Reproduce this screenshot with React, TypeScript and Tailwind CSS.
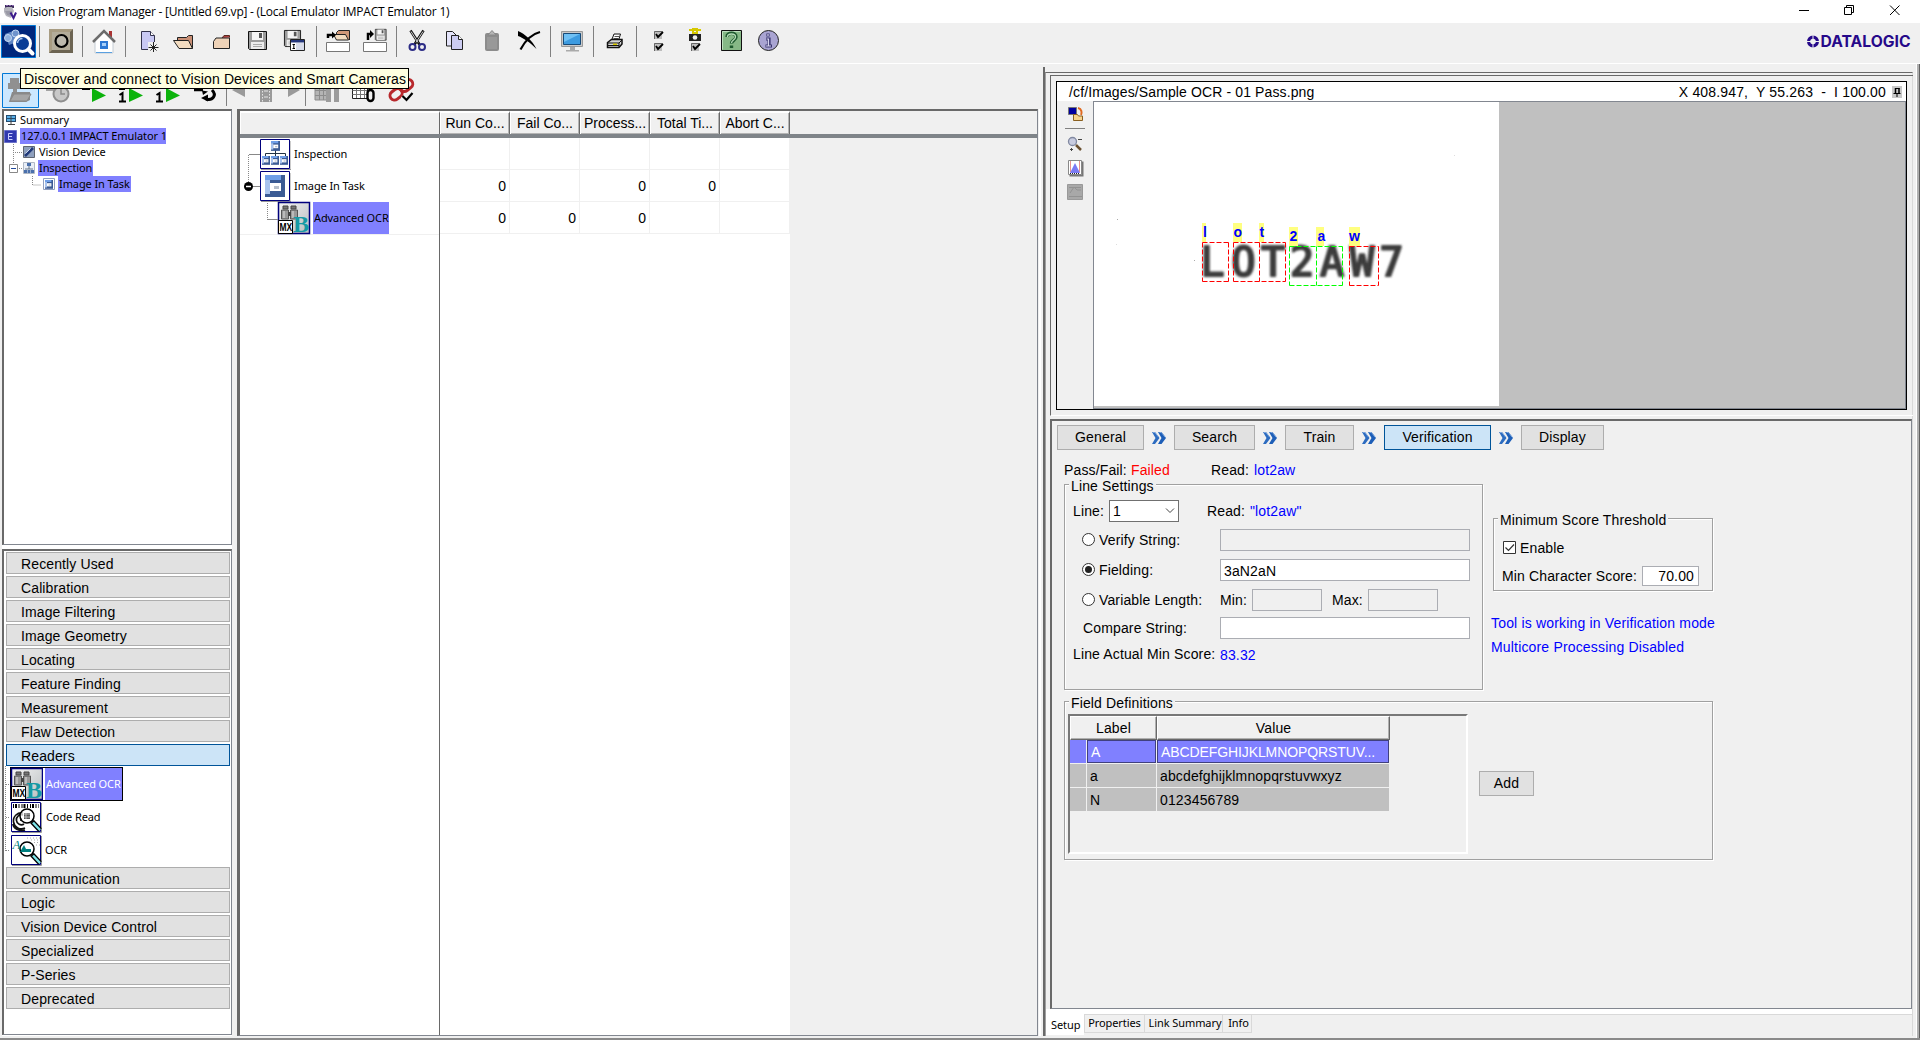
import React from "react";

type IcoProps = { x: number; w: number; y?: number; h?: number; className?: string; children?: React.ReactNode };

/* Icon slot: shapes are drawn in window coordinates, the slot takes its place by flow. */
function Ico({ x, w, y = 23, h = 40, className = "", children }: IcoProps) {
  return (
    <svg className={`block shrink-0 ${className}`} width={w} height={h} viewBox={`${x} ${y} ${w} ${h}`} fill="none">
      {children}
    </svg>
  );
}

const Sep = ({ className = "mt-[3px] h-[31px]" }: { className?: string }) => (
  <div className={`w-px shrink-0 bg-[#808080] ${className}`} />
);

function TitleBar() {
  return (
    <div className="flex h-[23px] shrink-0 items-center bg-white">
      <Ico x={0} y={0} w={23} h={23}>
        <path d="M5 5h9v3H5z" fill="#3c2a5c" />
        <path d="M6 5.500h2M9 5.500h2M12 5.500h2" stroke="#8a6ab0" />
        <path d="M4 8l3-1h5l2 4-3 7-5-2-2-4z" fill="#b4b4bc" />
        <path d="M5 11h7l-1 5-4-1z" fill="#9a9aa6" />
        <path d="M10.500 12.500l3 5.500 2.500-5.500" stroke="#3b1a8c" strokeWidth="2" />
      </Ico>
      <span className="font-['Open_Sans'] text-[12px] leading-[23px] tracking-[-0.24px] whitespace-pre text-black">
        Vision Program Manager - [Untitled 69.vp] - (Local Emulator IMPACT Emulator 1)
      </span>
      <Ico x={1790} y={0} w={130} h={23} className="ml-auto">
        <path d="M1799 10.500h10" stroke="#000" />
        <path d="M1844.500 7.500h7v7h-7zM1846.500 7.500v-2h7v7h-2" stroke="#000" />
        <path d="M1890 5.500l9.500 9.500M1899.500 5.500l-9.500 9.500" stroke="#000" />
      </Ico>
    </div>
  );
}

function Floppy({ x, y, s = 19 }: { x: number; y: number; s?: number }) {
  return (
    <g transform={`translate(${x} ${y}) scale(${s / 19})`}>
      <path d="M.500 .500h18v18h-17l-1-1z" fill="#9c9c9c" stroke="#111" />
      <path d="M4 1h11v8H4z" fill="#f4f4f4" />
      <path d="M11 2h3v5h-3z" fill="#555" />
      <path d="M3 11h13v7H3z" fill="#ececec" />
      <path d="M5 13.500h9M5 15.500h9" stroke="#aaa" />
    </g>
  );
}

function MainToolbar() {
  return (
    <div className="flex h-[41px] shrink-0 items-start border-b border-white bg-[#f0f0f0]">
      <Ico x={0} w={39}>
        <path d="M1.500 25.500h34v32h-34z" fill="#00277c" stroke="#0078d7" />
        <path d="M5 34l8-3 6 2-2 9-8 3z" fill="#5f86c4" />
        <circle cx="8" cy="38" r="3.500" fill="#8fb0de" stroke="#c4d8f2" />
        <circle cx="15.500" cy="33.500" r="3.500" fill="#6f93cc" stroke="#c4d8f2" />
        <circle cx="22.500" cy="43.500" r="8" fill="#0a3d96" stroke="#fff" strokeWidth="3" />
        <path d="M28.500 49.500l4 4" stroke="#fff" strokeWidth="4" strokeLinecap="round" />
        <path d="M17.500 43a5 5 0 0 1 5-4.500" stroke="#a9c6ee" strokeWidth="1.500" />
      </Ico>
      <Sep />
      <Ico x={40} w={42}>
        <path d="M49 29h24v24H49z" fill="#a89c82" />
        <path d="M49 53l3-3h18l3 3zM73 29v24l-3-3V32z" fill="#6c6452" />
        <path d="M52 32h18v18H52z" fill="#b3ac9a" />
        <circle cx="61.500" cy="41" r="6" fill="#bdb9ae" stroke="#000" strokeWidth="2.200" />
      </Ico>
      <Sep />
      <Ico x={83} w={42}>
        <path d="M109 31h3v6h-3z" fill="#a33" />
        <path d="M95 41l9-9 9 9v12H95z" fill="#fff" stroke="#c4ccd4" />
        <path d="M93 42l11-11 11 11" stroke="#6d6d6d" strokeWidth="2.500" />
        <path d="M100 41h8v8h-8z" fill="#2c78d4" />
        <path d="M102 43h4v3h-4z" fill="#a8d0fa" />
        <path d="M96 52.500h16" stroke="#5aa0e0" />
      </Ico>
      <Sep />
      <Ico x={126} w={40}>
        <path d="M141.500 31.500h9l4 4v14h-13z" fill="#c9c9f4" stroke="#33334d" />
        <path d="M150.500 31.500v4h4" fill="#fff" stroke="#33334d" />
        <path d="M148 42h11v10h-11z" fill="#f0f0f0" />
        <path d="M153.500 42v10M148.500 47.500h10M150.500 44.500l6 6M156.500 44.500l-6 6" stroke="#222" />
      </Ico>
      <Ico x={166} w={36}>
        <path d="M177.500 45.500v-8h9l2-2h4v13" fill="#c88e74" stroke="#222" />
        <path d="M173.500 40.500h15l4 8h-13.500z" fill="#f3dcc0" stroke="#222" />
      </Ico>
      <Ico x={202} w={36}>
        <path d="M222 38l2-2.500h5.500v2" fill="#b04040" stroke="#5a2a20" />
        <path d="M213.500 48.500v-7l2.500-3.500h13.500v10.500z" fill="#efd3b8" stroke="#222" />
      </Ico>
      <Ico x={238} w={37}>
        <Floppy x={248} y={31} />
      </Ico>
      <Ico x={275} w={41}>
        <Floppy x={284} y={30} s={17} />
        <path d="M290.500 39.500h14v11h-14z" fill="#fff" stroke="#222" />
        <path d="M291 40h13v2.500h-13z" fill="#24367c" />
        <path d="M292.500 44.500h2.500m-1.200 0v4m-1.300 0h2.500" stroke="#000" />
        <path d="M296 43h8v7h-8z" fill="#d8dcea" />
      </Ico>
      <Sep />
      <Ico x={317} w={39}>
        <path d="M336.500 36.500v-4l2-2h11v9.500" fill="#d09878" stroke="#222" />
        <path d="M333.500 34.500h12l3 5.500h-12z" fill="#f3dcc0" stroke="#222" />
        <path d="M328 38v-3h4" stroke="#000" strokeWidth="2.500" />
        <path d="M332 31.500l4 3.500-4 3.500z" fill="#000" />
        <path d="M326.500 42.500h23v9h-23z" fill="#fff" stroke="#777" />
      </Ico>
      <Ico x={356} w={40}>
        <Floppy x={375} y={29} s={11.500} />
        <path d="M368 40v-6h2" stroke="#000" strokeWidth="2.500" />
        <path d="M370 30l4 4-4 4z" fill="#000" />
        <path d="M363.500 42.500h23v9h-23z" fill="#fff" stroke="#777" />
      </Ico>
      <Sep />
      <Ico x={397} w={40}>
        <path d="M410.500 30.500l9 14M423.500 30.500l-9 14" stroke="#111" strokeWidth="2.600" />
        <path d="M411 31.500l7 11M423 31.500l-7 11" stroke="#e8e8e8" strokeWidth=".9" />
        <circle cx="412.500" cy="47" r="3" stroke="#2d2d86" strokeWidth="2" />
        <circle cx="422" cy="47" r="3" stroke="#2d2d86" strokeWidth="2" />
      </Ico>
      <Ico x={437} w={37}>
        <path d="M446.500 31.500h6l3.500 3.500v11h-9.500z" fill="#e4e4fa" stroke="#222" />
        <path d="M451.500 35.500h7l4 4v10h-11z" fill="#cdcdf2" stroke="#222" />
        <path d="M458.500 35.500v4h4" fill="#fff" stroke="#222" />
      </Ico>
      <Ico x={474} w={36}>
        <rect x="485" y="33" width="14" height="18" rx="2" fill="#8c8c8c" />
        <path d="M488 35l4-4.500 4 4.500z" fill="#b5b5b5" stroke="#888" />
        <path d="M487 37h10v12h-10z" fill="#999" />
      </Ico>
      <Ico x={510} w={40}>
        <path d="M518 31c7 3 14 9 18.500 18-7-7-13-11-18.500-13z" fill="#000" />
        <path d="M540 32c-8 2-15 9-19.500 17.500" stroke="#000" strokeWidth="2.200" />
      </Ico>
      <Sep />
      <Ico x={551} w={42}>
        <path d="M561.500 31.500h21v15h-21z" fill="#c9c9c9" stroke="#999" />
        <path d="M563.500 33.500h17v11h-17z" fill="#3d9be0" stroke="#174a78" />
        <path d="M564 34h16l-16 8z" fill="#6fc0f4" />
        <path d="M570 47h5v3h4v1.500h-13V50h4z" fill="#aaa" />
      </Ico>
      <Sep />
      <Ico x={594} w={42}>
        <path d="M611.500 40.500l2.500-6.500h6.500l-2 6.500z" fill="#fff" stroke="#111" />
        <path d="M613.500 38.500h5M614.500 36.500h5" stroke="#555" />
        <path d="M607.500 42.500l4-3h10.500v4.500l-3 3.500h-11.500z" fill="#d6d6d6" stroke="#111" strokeWidth="1.500" />
        <path d="M608 43h11l3-3M608 45.500h11M619 43v4" stroke="#111" />
        <path d="M613 44.300h4" stroke="#d8c800" strokeWidth="1.500" />
      </Ico>
      <Sep />
      <Ico x={637} w={40}>
        {[31, 43].map((y) => (
          <g key={y}>
            <path d={`M654 ${y}h8v8h-8z`} fill="#bdbdbd" />
            <path d={`M654.500 ${y + 8}v-7.500h8`} stroke="#666" />
            <path d={`M656 ${y + 3}l2 3 5-5`} stroke="#000" strokeWidth="1.800" />
          </g>
        ))}
      </Ico>
      <Ico x={677} w={35}>
        <path d="M689 30h12M693 29h4v4h-4z" stroke="#d6c800" strokeWidth="2" />
        <path d="M689 34h12v7h-12z" fill="#222" />
        <circle cx="695" cy="37.500" r="2.300" fill="#eee" />
        <path d="M691 43h8v8h-8z" fill="#bdbdbd" />
        <path d="M691.500 51v-7.500h8" stroke="#666" />
        <path d="M693 46l2 3 5-5" stroke="#000" strokeWidth="1.800" />
      </Ico>
      <Ico x={712} w={38}>
        <path d="M721.500 30.500h20v20h-20z" fill="#86b886" stroke="#111" />
        <path d="M722.500 49.500v-18h18" stroke="#bfe0bf" />
        <path d="M727 37c0-5 9-5 9 0 0 3.500-4.500 3-4.500 6.500M731.500 45.500v2.500" stroke="#1f5a2f" strokeWidth="3.400" />
        <path d="M727.500 37c0-4 8-4 8 0 0 3-4 3-4 6" stroke="#b7dcb7" strokeWidth="1.300" />
      </Ico>
      <Ico x={750} w={40}>
        <circle cx="768.500" cy="40.500" r="10" fill="#a9a4d2" stroke="#222" />
        <path d="M766 39h3v7m-3.500 0h6.500M768 33.500v3" stroke="#3a3670" strokeWidth="3.200" />
        <path d="M766.500 39h2v7m-2.500 0h5M768 34v2" stroke="#d8d6f0" strokeWidth="1.200" />
      </Ico>
      <Ico x={1800} w={120} className="ml-auto">
        <circle cx="1813" cy="41.500" r="4.400" stroke="#26098a" strokeWidth="3.200" />
        <path d="M1813 35v4.500M1813 43.500v5M1806.500 41.500h4.500M1815 41.500h5" stroke="#f0f0f0" strokeWidth="1" />
        <text x="1820.500" y="47" fontFamily="Inter" fontWeight="700" fontSize="15.500" fill="#26098a" textLength="90" lengthAdjust="spacingAndGlyphs">
          DATALOGIC
        </text>
      </Ico>
    </div>
  );
}

function RunToolbar() {
  const play = (x: number) => <path d={`M${x} 88v14l14-6.500z`} fill="#0cb30c" />;
  return (
    <div className="relative flex h-[45px] shrink-0">
      <Ico x={0} y={64} h={45} w={41}>
        <path d="M2.500 73.500h36v34h-36z" fill="#cce8ff" stroke="#0078d7" />
        <path d="M10 78h9v5h-9zM8 83h14v6H8zM13 89h4v4h-4z" fill="#909090" />
        <path d="M12 92h18v8l-4 2H9z" fill="#8a8a8a" />
        <path d="M10 101l4-7h17l-4 7z" fill="#a6a6a6" stroke="#888" />
      </Ico>
      <Ico x={41} y={64} h={45} w={37}>
        <circle cx="61" cy="94" r="7.500" fill="#c8c8c8" stroke="#8f8f8f" strokeWidth="2" />
        <path d="M61 89v5h4M46 90h8" stroke="#8a8a8a" strokeWidth="1.500" />
      </Ico>
      <Ico x={78} y={64} h={45} w={37}>
        {play(92)}
        <path d="M82 88.500h8" stroke="#000" strokeWidth="3" />
      </Ico>
      <Ico x={115} y={64} h={45} w={37}>
        {play(129)}
        <path d="M119 89h6" stroke="#000" strokeWidth="2" />
        <path d="M119.500 95l3-2v8.500m-3.500 0h7" stroke="#000" strokeWidth="2" />
      </Ico>
      <Ico x={152} y={64} h={45} w={37}>
        {play(166)}
        <path d="M156.500 95l3-2v8.500m-3.500 0h7" stroke="#000" strokeWidth="2" />
      </Ico>
      <Ico x={189} y={64} h={45} w={37}>
        <path d="M194 90h9" stroke="#000" strokeWidth="2.500" />
        <path d="M212 90c5 5 1 11-6 9" stroke="#000" strokeWidth="3" />
        <path d="M202 90.500l6 1-5 3.500zM208 94.500v7l-7-3.500z" fill="#000" />
      </Ico>
      <Sep className="mt-[11px] h-[31px]" />
      <Ico x={227} y={64} h={45} w={26}>
        <path d="M245 83v14l-13-7z" fill="#9a9a9a" />
      </Ico>
      <Ico x={253} y={64} h={45} w={28}>
        <path d="M260 80h12v22h-12z" fill="#9a9a9a" />
        <path d="M262.500 82v20M269.500 82v20" stroke="#e4e4e4" strokeDasharray="1.500 1.500" />
        <path d="M264 91h4M264 97h4" stroke="#e4e4e4" />
      </Ico>
      <Ico x={281} y={64} h={45} w={24}>
        <path d="M288 83v14l12-7z" fill="#9a9a9a" />
      </Ico>
      <Sep className="mt-[11px] h-[31px]" />
      <Ico x={306} y={64} h={45} w={40}>
        <path d="M315 86h13v14h-13z" fill="#b4b4b4" stroke="#8c8c8c" />
        <path d="M315 90.500h13M315 95.500h13M319.500 86v14M323.500 86v14" stroke="#8c8c8c" />
        <path d="M326 86h5v16h-5zM334 86h5v16h-5z" fill="#9c9c9c" />
      </Ico>
      <Ico x={346} y={64} h={45} w={37}>
        <path d="M352.500 86.500h15v12h-15z" fill="#fff" stroke="#222" />
        <path d="M352.500 90.500h15M352.500 94.500h15M356.500 86v12M360.500 86v12M364.500 86v12" stroke="#777" />
        <rect x="367.500" y="90" width="6" height="11" rx="3" fill="#f0f0f0" stroke="#000" strokeWidth="2.400" />
      </Ico>
      <Ico x={383} y={64} h={45} w={37}>
        <rect x="390" y="90" width="13" height="9" rx="4.500" stroke="#b8282c" strokeWidth="3" transform="rotate(-38 396 95)" />
        <rect x="399" y="81" width="14" height="9" rx="4.500" stroke="#b8282c" strokeWidth="3" transform="rotate(-38 406 85)" />
        <path d="M402.500 96l4 4 6-7" stroke="#f0f0f0" strokeWidth="4.500" />
        <path d="M402.500 96l4 4 6-7" stroke="#000" strokeWidth="2.200" />
      </Ico>
      <div className="absolute left-[20px] top-[4px] z-20 h-[21px] w-[389px] border border-black bg-[#ffffe1] pl-[3px] font-['Liberation_Sans'] text-[14px] leading-[20px] tracking-[0.13px] whitespace-nowrap">
        Discover and connect to Vision Devices and Smart Cameras
      </div>
    </div>
  );
}

function TreeRow({ icon, children, selected, pl, w = "" }: { icon: React.ReactNode; children: string; selected?: boolean; pl: string; w?: string }) {
  return (
    <div className={`flex h-[16px] items-center ${pl}`}>
      {icon}
      <span className={`h-[16px] pl-px leading-[15px] whitespace-nowrap ${w} ${selected ? "bg-[#8080ff]" : ""}`}>{children}</span>
    </div>
  );
}

function MiniTask({ x, y, s }: { x: number; y: number; s: number }) {
  return (
    <g transform={`translate(${x} ${y}) scale(${s / 20})`}>
      <path d="M0 0h20v22H0z" fill="#3b5b94" />
      <path d="M0 0h16v5H0z" fill="#6f9fe8" />
      <path d="M0 5h5v14H0z" fill="#a9c4ee" />
      <path d="M5 8h11v8H5z" fill="#fff" />
      <path d="M9 11h5v3H9z" fill="#b8c0cc" />
    </g>
  );
}

function DeviceTree() {
  return (
    <div className="relative h-[436px] w-[230px] border-t-2 border-r border-b border-l-2 border-[#696969] border-r-[#828790] border-b-[#828790] bg-white pt-px font-['Noto_Sans'] text-[11px] tracking-[-0.1px]">
      <svg className="absolute left-0 top-[32px]" width="60" height="46" fill="none">
        <path d="M9.500 1v24M11 9.500h8M15 25.500h4M28.500 33v9h9" stroke="#888" strokeDasharray="1 1" />
        <path d="M5.500 21.500h8v8h-8z" fill="#fff" stroke="#888" />
        <path d="M7 25.500h5" stroke="#224a9a" />
      </svg>
      <TreeRow pl="pl-[1px]" icon={<Ico x={0} y={0} w={14} h={12}><path d="M1 1h10v7H1z" fill="#234b70" /><path d="M2 2h8v2H2zM2 5h8v2H2z" fill="#58aee6" /><path d="M6 1v9M3 10.500h7" stroke="#444" /></Ico>}>Summary</TreeRow>
      <TreeRow pl="pl-0" w="w-[146px]" selected icon={<Ico x={0} y={0} w={16} h={13}><path d="M.500 .500h12v12H.500z" fill="#3038b0" stroke="#6a70c8" /><path d="M8.500 3.500h-4v6h4M5 6.500h3" stroke="#c8ccff" /></Ico>}>127.0.0.1 IMPACT Emulator 1</TreeRow>
      <TreeRow pl="pl-[19px]" icon={<Ico x={0} y={0} w={15} h={13}><path d="M.500 .500h11v11h-11z" fill="#8fa0bd" stroke="#5f6570" /><path d="M2 10l8-8" stroke="#223a78" strokeWidth="2.500" /><path d="M2.500 7.500l5-5" stroke="#c8d4ea" /></Ico>}>Vision Device</TreeRow>
      <TreeRow pl="pl-[19px]" w="w-[55px]" selected icon={<Ico x={0} y={0} w={15} h={13}><path d="M.500 .500h11v11h-11z" fill="#e9eef6" stroke="#b0b8c4" /><path d="M4 1h4v3H4zM1 8h3v3H1zM4.500 8h3v3h-3zM8 8h3v3H8z" fill="#4a70ac" /><path d="M6 4v3M2 7h8" stroke="#678" /></Ico>}>Inspection</TreeRow>
      <TreeRow pl="pl-[38px]" w="w-[73px]" selected icon={<Ico x={0} y={0} w={16} h={13}><path d="M1.500 .500h11v11h-11z" fill="#fff" stroke="#90a0c0" /><MiniTask x={3} y={2} s={8} /></Ico>}>Image In Task</TreeRow>
    </div>
  );
}

function AdvancedOcrIcon() {
  return (
    <svg className="block shrink-0 overflow-visible" width="32" height="32" fill="none">
      <defs>
        <linearGradient id="steel" x1="0" x2="1" y1="0" y2="1">
          <stop offset="0" stopColor="#f4f4f4" />
          <stop offset="1" stopColor="#b9bec0" />
        </linearGradient>
      </defs>
      <path d="M.500 .500h31v31H.500z" fill="url(#steel)" stroke="#00007c" strokeWidth="1.500" />
      <path d="M5 4h5v3H5zM13 4h5v3h-5z" fill="#777" stroke="#444" />
      <path d="M3.500 8h7v9h-7zM12.500 8h7v9h-7z" fill="#999" stroke="#555" />
      <path d="M6 9v7M15 9v7" stroke="#ddd" />
      <path d="M10 10h3v4h-3z" fill="#444" />
      <text x="15" y="30" fontFamily="Liberation Serif" fontWeight="700" fontSize="24" fill="#159aa4">B</text>
      <path d="M.500 18.500h14v13H.500z" fill="#fff" stroke="#000" />
      <text x="1.500" y="29" fontFamily="Liberation Sans" fontWeight="700" fontSize="10" fill="#000" textLength="12.500" lengthAdjust="spacingAndGlyphs">MX</text>
    </svg>
  );
}

function Magnifier() {
  return (
    <g>
      <circle cx="16" cy="14" r="7" fill="#fff" fillOpacity=".7" stroke="#000" strokeWidth="1.500" />
      <path d="M21 19.500l8 8.500" stroke="#000" strokeWidth="5" />
      <path d="M22 20.500l7 7.500" stroke="#7fe6ea" strokeWidth="2.500" />
    </g>
  );
}

const Category = ({ name, active }: { name: string; active?: boolean }) => (
  <div className={`h-[22px] w-[224px] shrink-0 border pl-[14px] text-[14px] leading-[22px] tracking-[0.12px] ${active ? "border-[#005499] bg-[#cce4f7]" : "border-[#adadad] bg-[#e1e1e1]"}`}>{name}</div>
);

function ToolPalette() {
  const top = ["Recently Used", "Calibration", "Image Filtering", "Image Geometry", "Locating", "Feature Finding", "Measurement", "Flaw Detection"];
  const bottom = ["Communication", "Logic", "Vision Device Control", "Specialized", "P-Series", "Deprecated"];
  return (
    <div className="mt-[4px] h-[486px] w-[230px] border-t-2 border-r border-b border-l-2 border-[#696969] border-r-[#828790] border-b-[#828790] bg-white font-['Liberation_Sans']">
      <div className="flex flex-col gap-[2px] pt-[1px] pl-[2px]">
        {top.map((n) => <Category key={n} name={n} />)}
        <Category name="Readers" active />
      </div>
      <div className="relative flex h-[101px] flex-col pt-px pl-[6px] font-['Noto_Sans'] text-[11px] leading-[16px] tracking-[-0.1px]">
        <svg className="absolute left-0 top-0" width="8" height="90" fill="none">
          <path d="M1.500 0v85M2 18.500h4M2 51.500h4M2 84.500h4" stroke="#888" strokeDasharray="1 1" />
        </svg>
        <div className="flex h-[34px] w-[113px] items-center border border-black bg-[#8080ff]">
          <AdvancedOcrIcon />
          <div className="h-full w-[2px] bg-white" />
          <span className="pb-px pl-px whitespace-nowrap text-white">Advanced OCR</span>
        </div>
        <div className="mt-px flex h-[33px] items-start">
          <svg className="ml-px block" width="31" height="31" fill="none">
            <path d="M1 30.500h29.500V1" stroke="#999" />
            <path d="M.500 .500h29v29H.500z" fill="#fff" stroke="#00007c" />
            <path d="M2 4h26" stroke="#000" strokeWidth="4" strokeDasharray="1 1 2 1.500 1 2" />
            <path d="M14 26a8 8 0 1 1-2-15M13 22a5 5 0 1 1-1-9M10 19v-3M14 28C8 30 2 26 2 22" stroke="#111" strokeWidth="1.700" />
            <Magnifier />
            <path d="M13 11h6v6h-6z" fill="#555" />
            <path d="M13 12h6M13 15h6M15 11v6" stroke="#bbb" />
          </svg>
          <span className="pt-[7px] pl-[4px]">Code Read</span>
        </div>
        <div className="flex h-[32px] items-start">
          <svg className="ml-px block overflow-visible" width="31" height="31" fill="none">
            <path d="M1 30.500h29.500V1" stroke="#999" />
            <path d="M.500 .500h29v29H.500z" fill="#fff" stroke="#00007c" />
            <path d="M16 3h13M20 5h9M23 7.500h6M25 10h4" stroke="#aaa" strokeDasharray="1 2" />
            <Magnifier />
            <path d="M9 17l4-7 2 4h5v3z" fill="#008080" />
            <text x="1.500" y="14" fontFamily="Liberation Serif" fontStyle="italic" fontSize="13" fill="#008080">A</text>
          </svg>
          <span className="pt-[7px] pl-[3px]">OCR</span>
        </div>
      </div>
      <div className="flex flex-col gap-[2px] pl-[2px]">
        {bottom.map((n) => <Category key={n} name={n} />)}
      </div>
    </div>
  );
}

function TaskTable() {
  const cols = ["Run Co...", "Fail Co...", "Process...", "Total Ti...", "Abort C..."];
  const rows = [["", "", "", "", ""], ["0", "", "0", "0", ""], ["0", "0", "0", "", ""]];
  return (
    <div className="ml-[5px] flex h-[927px] w-[801px] flex-col border-t-2 border-r border-b border-l-[3px] border-[#696969] border-r-[#828790] border-b-[#828790] font-['Liberation_Sans'] text-[14px]">
      <div className="flex h-[27px] shrink-0 border-b-[4px] border-[#7f8489] bg-[#f0f0f0]">
        <div className="w-[200px] border-t-2 border-r border-l border-white border-r-[#696969]" />
        {cols.map((c) => (
          <div key={c} className="w-[70px] border-t-2 border-r border-l border-white border-r-[#696969] text-center leading-[20px] shadow-[inset_-1px_-1px_0_#b4b4b4]">{c}</div>
        ))}
      </div>
      <div className="flex grow">
        <div className="w-[200px] border-r border-[#696969] bg-white font-['Noto_Sans'] text-[11px] leading-[16px] tracking-[-0.1px]">
          <div className="relative border-b border-[#f0f0f0]">
            <svg className="absolute left-0 top-0" width="40" height="96" fill="none">
              <path d="M8.500 17v28M27.500 65v16" stroke="#888" strokeDasharray="1 1" />
              <path d="M9 16.500h11M12 48.500h8M27 81.500h11" stroke="#888" />
              <circle cx="8.500" cy="48.500" r="4.500" fill="#000" />
              <path d="M6 48.500h5" stroke="#fff" strokeWidth="1.500" />
            </svg>
            <div className="flex h-[32px] items-center pl-[20px]">
              <svg className="-mb-px block" width="31" height="31" fill="none">
                <path d="M1 30.500h30V2" stroke="#999" />
                <path d="M.500 .500h29v29H.500z" fill="#fff" stroke="#00007c" />
                <path d="M15.500 9v8M5.500 17v-2.500h20V17" stroke="#234" />
                <MiniTask x={11} y={2} s={9} />
                <MiniTask x={2} y={17} s={8} />
                <MiniTask x={11} y={17} s={8} />
                <MiniTask x={20} y={17} s={8} />
              </svg>
              <span className="pb-px pl-[3px]">Inspection</span>
            </div>
            <div className="flex h-[32px] items-center pl-[20px]">
              <svg className="-mb-px block" width="31" height="31" fill="none">
                <path d="M1 30.500h30V2" stroke="#999" />
                <path d="M.500 .500h29v29H.500z" fill="#fff" stroke="#00007c" />
                <MiniTask x={5} y={4} s={20} />
              </svg>
              <span className="pb-px pl-[3px]">Image In Task</span>
            </div>
            <div className="flex h-[32px] items-center pl-[38px]">
              <AdvancedOcrIcon />
              <span className="ml-[3px] h-[32px] w-[76px] bg-[#8080ff] pl-px leading-[31px] whitespace-nowrap">Advanced OCR</span>
            </div>
          </div>
        </div>
        <div className="w-[350px] bg-white">
          {rows.map((r, i) => (
            <div key={i} className="flex h-[32px]">
              {r.map((v, j) => (
                <div key={j} className="w-[70px] border-r border-b border-[#f0f0f0] pr-[3px] text-right leading-[32px]">{v}</div>
              ))}
            </div>
          ))}
        </div>
      </div>
    </div>
  );
}

function ImageCanvas() {
  const outlines = [
    ["M1202.5 242.5h26M1202.5 281.5h26M1202.5 242.5v39M1228.500 242.5v39", "#ff0000"],
    ["M1233.5 242.5h52M1233.5 281.5h52M1233.5 242.5v39M1259.5 242.5v39M1285.5 242.5v39", "#ff0000"],
    ["M1289.5 246.5h53M1289.5 285.5h53M1289.5 246.5v39M1316.5 246.5v39M1342.5 246.5v39", "#00ff00"],
    ["M1349.5 246.5h29M1349.5 285.5h29M1349.5 246.5v39M1378.5 246.5v39", "#ff0000"],
  ] as const;
  const marks = [
    [1202, 223, 4, "l", 1203],
    [1233, 223, 9, "o", 1233.5],
    [1259, 223, 5, "t", 1259.5],
    [1289, 227, 9, "2", 1289.5],
    [1316, 227, 8, "a", 1317.5],
    [1349, 227, 11, "w", 1349],
  ] as const;
  return (
    <svg className="block" width="406" height="304" viewBox="1094 102 406 304" fill="none">
      <path d="M1094 102h405v304h-405z" fill="#fff" />
      <path d="M1117 219.500h1M1194 260.500h1" stroke="#aaa" />
      <path d="M1116 244.500h1M1454 155.500h1" stroke="#ddd" />
      <filter id="soft"><feGaussianBlur stdDeviation=".8" /></filter>
      <g filter="url(#soft)" fill="#3c3c3c" stroke="#3c3c3c" strokeWidth="2.200" strokeLinejoin="round">
        <text x="1200.500 1231.500 1261 1290 1320 1350 1379.500" y="276" fontFamily="DejaVu Sans Mono" fontSize="40">LOT2AW7</text>
      </g>
      {marks.map(([x, y, w, t, tx]) => (
        <g key={t}>
          <rect x={x} y={y} width={w} height="19" fill="#ffff80" />
          <text x={tx} y={y + 14} fontFamily="Liberation Sans" fontWeight="700" fontSize="14" fill="#0000ff">{t}</text>
        </g>
      ))}
      {outlines.map(([d, c]) => (
        <path key={d} d={d} stroke={c} strokeDasharray="5 2" />
      ))}
    </svg>
  );
}

function ImageView() {
  return (
    <div className="ml-[3px] h-[341px] w-[863px] border-t border-l border-b border-[#696969] border-b-white pt-[5px] pl-[5px]">
      <div className="flex h-[329px] w-[851px] flex-col border border-black bg-[#f0f0f0]">
        <div className="flex h-[19px] shrink-0 items-center bg-white pl-[12px] font-['Liberation_Sans'] text-[14px] leading-[20px] tracking-[0.12px]">
          <span className="pt-px">/cf/Images/Sample OCR - 01 Pass.png</span>
          <span className="ml-auto pt-px tracking-[0.16px] whitespace-pre">X 408.947,  Y 55.263  -  I 100.00</span>
          <svg className="mr-[4px] ml-[6px] block" width="10" height="12" fill="none">
            <path d="M0 0h10v12H0z" fill="#c8c8c8" />
            <path d="M3.500 2v5M7 2v5" stroke="#000" strokeWidth="1.500" />
            <path d="M3 2.500h4.500M1.500 7.500h7M5 7.500v3.500" stroke="#000" />
          </svg>
        </div>
        <div className="flex h-[308px]">
          <div className="flex w-[36px] flex-col">
            <Ico x={1057} y={101} w={36} h={120}>
              <path d="M1068.500 107.500h8v7h-8z" fill="#0000a0" stroke="#777" />
              <path d="M1078 108c4 1 4 5 3 7" stroke="#e06a20" strokeWidth="2" />
              <path d="M1073.500 120.500v-6h4l1 1.500h4v4.500z" fill="#f8d48c" stroke="#8a6020" />
              <path d="M1065 128.500h20" stroke="#808080" />
              <circle cx="1072.500" cy="141.500" r="4" fill="#c8cce0" stroke="#8088a0" strokeWidth="1.300" />
              <path d="M1076 145l5 5" stroke="#6a5030" strokeWidth="2.500" />
              <path d="M1078 139.500h4M1070 149.500h3M1071.500 148v3" stroke="#444" />
              <path d="M1069.500 175.500h13v-14" stroke="#777" strokeWidth="2" />
              <path d="M1068.500 160.500h13v14h-13z" fill="#fff" stroke="#888" />
              <path d="M1070.500 161v11M1079.500 161v11" stroke="#e89090" />
              <path d="M1070 173l5-10 5 10z" fill="#7a7af4" />
              <path d="M1070 173.500h10" stroke="#222" strokeDasharray="1 1" />
              <path d="M1067.500 184.500h15v15h-15z" fill="#a8a8a8" stroke="#999" />
              <path d="M1070 193l4-6 3 3h4M1069 196.500h13M1069 187.500h12" stroke="#929292" />
            </Ico>
          </div>
          <div className="w-[813px] border border-[#828790] bg-[#c0c0c0]">
            <ImageCanvas />
          </div>
        </div>
      </div>
    </div>
  );
}

const Box = "shadow-[1px_1px_0_#fff,inset_1px_1px_0_#fff] border border-[#a0a0a0] relative";
const Legend = ({ children }: { children: string }) => (
  <span className="absolute -top-[9px] left-[4px] bg-[#f0f0f0] px-[2px] leading-[20px] whitespace-nowrap">{children}</span>
);
const Btn = ({ className, children }: { className: string; children: string }) => (
  <button className={`h-[25px] shrink-0 border border-[#adadad] bg-[#e1e1e1] text-center leading-[23px] ${className}`}>{children}</button>
);
const Input = ({ className, children }: { className: string; children?: string }) => (
  <div className={`h-[22px] shrink-0 border border-[#abadb3] pl-[3px] leading-[22px] ${className}`}>{children}</div>
);
const Radio = ({ on }: { on?: boolean }) => (
  <span className="ml-[9px] flex size-[13px] shrink-0 -translate-y-px items-center justify-center rounded-full border border-[#333] bg-white">
    {on && <span className="size-[7px] rounded-full bg-[#222]" />}
  </span>
);
const Chevrons = () => (
  <svg className="mx-[8px] block shrink-0" width="14" height="14" fill="none">
    <path d="M0 1h3l4.500 6L3 13H0l3.500-6z" fill="#2d6cc0" />
    <path d="M6 1h3.500l4.500 6-4.500 6H6l3.500-6z" fill="#1e5fb8" />
    <path d="M1 1.500h2L6.500 6M7.500 1.500h2L13 6" stroke="#7aa4dc" />
  </svg>
);

function LineSettings() {
  return (
    <div className={`${Box} flex h-[206px] w-[419px] flex-col pl-[8px]`}>
      <Legend>Line Settings</Legend>
      <div className="mt-[15px] flex h-[22px] items-center">
        <span className="w-[36px]">Line:</span>
        <div className="flex h-[22px] w-[70px] items-center border border-[#707070] bg-white pl-[3px]">
          1
          <svg className="mr-[3px] ml-auto block" width="10" height="6" fill="none"><path d="M1 .500l4 4 4-4" stroke="#444" /></svg>
        </div>
        <span className="ml-[28px] w-[43px]">Read:</span>
        <span className="text-[#0000ff]">"lot2aw"</span>
      </div>
      <div className="mt-[7px] flex h-[22px] items-center">
        <Radio /><span className="ml-[4px] w-[121px]">Verify String:</span>
        <Input className="w-[250px]" />
      </div>
      <div className="mt-[8px] flex h-[22px] items-center">
        <Radio on /><span className="ml-[4px] w-[121px]">Fielding:</span>
        <Input className="w-[250px] bg-white">3aN2aN</Input>
      </div>
      <div className="mt-[8px] flex h-[22px] items-center">
        <Radio /><span className="ml-[4px] w-[121px]">Variable Length:</span>
        <span className="w-[32px]">Min:</span>
        <Input className="w-[70px]" />
        <span className="ml-[10px] w-[36px]">Max:</span>
        <Input className="w-[70px]" />
      </div>
      <div className="mt-[6px] flex h-[22px] items-center">
        <span className="ml-[10px] w-[137px]">Compare String:</span>
        <Input className="w-[250px] bg-white" />
      </div>
      <div className="mt-[5px] flex h-[20px] items-center">
        <span className="w-[147px] whitespace-nowrap">Line Actual Min Score:</span>
        <span className="pt-px text-[#0000ff]">83.32</span>
      </div>
    </div>
  );
}

function FieldDefinitions() {
  const rows = [["A", "ABCDEFGHIJKLMNOPQRSTUV..."], ["a", "abcdefghijklmnopqrstuvwxyz"], ["N", "0123456789"]];
  const head = "border-t border-l border-white border-r border-r-[#696969] border-b-[#696969] shadow-[inset_-1px_-1px_0_#b0b0b0] border-b text-center leading-[22px] h-[24px]";
  return (
    <div className={`${Box} mt-[11px] ml-[7px] flex h-[159px] w-[649px]`}>
      <Legend>Field Definitions</Legend>
      <div className="mt-[12px] ml-[3px] h-[140px] w-[400px] border-2 border-[#787878] border-r-white border-b-white">
        <div className="flex">
          <div className={`${head} w-[87px]`}>Label</div>
          <div className={`${head} w-[233px]`}>Value</div>
        </div>
        {rows.map(([a, b], i) => (
          <div key={a} className={`flex h-[24px] w-[319px] gap-px leading-[22px] ${i === 0 ? "text-white" : ""}`}>
            <div className={`h-[23px] w-[16px] ${i === 0 ? "bg-[#8080ff]" : "bg-[#c0c0c0]"}`} />
            <div className={`h-[23px] w-[69px] border ${i === 0 ? "border-[#40407f] bg-[#8080ff] pl-[3px]" : "border-[#c0c0c0] bg-[#c0c0c0] pl-[2px]"}`}>{a}</div>
            <div className={`h-[23px] w-[232px] border whitespace-nowrap ${i === 0 ? "border-[#40407f] bg-[#8080ff] pl-[3px] tracking-[-0.1px]" : "border-[#c0c0c0] bg-[#c0c0c0] pl-[2px]"}`}>{b}</div>
          </div>
        ))}
      </div>
      <Btn className="mt-[69px] ml-[11px] w-[55px]">Add</Btn>
    </div>
  );
}

function SetupPanel() {
  return (
    <div className="mt-[3px] ml-[3px] flex h-[590px] w-[862px] flex-col border-t-2 border-r border-b border-l-2 border-[#696969] border-r-[#828790] border-b-[#828790] bg-[#f0f0f0] pt-[4px] pl-[5px] font-['Liberation_Sans'] text-[14px] leading-[20px] tracking-[0.14px]">
      <div className="flex h-[25px] items-center">
        <Btn className="w-[87px]">General</Btn><Chevrons />
        <Btn className="w-[81px]">Search</Btn><Chevrons />
        <Btn className="w-[69px]">Train</Btn><Chevrons />
        <button className="h-[25px] w-[107px] border border-[#005499] bg-[#cce4f7] text-center leading-[23px]">Verification</button><Chevrons />
        <Btn className="w-[83px]">Display</Btn>
      </div>
      <div className="mt-[10px] flex h-[20px] items-center pl-[7px]">
        <span className="w-[67px]">Pass/Fail:</span>
        <span className="w-[80px] text-[#ff0000]">Failed</span>
        <span className="w-[43px]">Read:</span>
        <span className="text-[#0000ff]">lot2aw</span>
      </div>
      <div className="mt-[4px] flex pl-[7px]">
        <LineSettings />
        <div className="ml-[10px] flex flex-col">
          <div className={`${Box} mt-[34px] h-[73px] w-[220px] pl-[8px]`}>
            <Legend>Minimum Score Threshold</Legend>
            <div className="mt-[18px] flex h-[21px] items-center">
              <svg className="ml-px block" width="13" height="13" fill="none">
                <path d="M.500 .500h12v12H.500z" fill="#fff" stroke="#333" />
                <path d="M2.500 6.500l3 3 5.500-6" stroke="#333" strokeWidth="1.200" />
              </svg>
              <span className="ml-[4px]">Enable</span>
            </div>
            <div className="mt-[8px] flex h-[20px] items-center">
              <span className="w-[140px]">Min Character Score:</span>
              <div className="h-[20px] w-[57px] border border-[#abadb3] bg-white pr-[4px] text-right leading-[19px]">70.00</div>
            </div>
          </div>
          <div className="mt-[20px] -ml-[2px] leading-[24px] tracking-[0.17px] whitespace-nowrap text-[#0000ff]">
            <div>Tool is working in Verification mode</div>
            <div>Multicore Processing Disabled</div>
          </div>
        </div>
      </div>
      <FieldDefinitions />
    </div>
  );
}

function Tabs() {
  const tab = "h-[19px] border-r border-b border-t border-[#d9d9d9] text-center leading-[15px]";
  return (
    <div className="flex h-[25px] font-['Noto_Sans'] text-[11px] tracking-[-0.08px]">
      <div className="h-[26px] w-[40px] bg-white pl-[5px] leading-[31px]">Setup</div>
      <div className="grow">
        <div className="h-[5px] w-[828px] bg-white" />
        <div className="flex w-[828px] border-[#d9d9d9] shadow-[inset_0_1px_0_#d9d9d9]">
          <div className={`${tab} w-[61px] border-l`}>Properties</div>
          <div className={`${tab} w-[78px] pl-[3px]`}>Link Summary</div>
          <div className={`${tab} w-[29px] pl-[3px]`}>Info</div>
        </div>
      </div>
    </div>
  );
}

export default function App() {
  return (
    <div className="flex h-[1040px] w-[1920px] flex-col overflow-hidden bg-[#f0f0f0] font-['Liberation_Sans'] text-black">
      <TitleBar />
      <MainToolbar />
      <div className="flex h-[974px] shrink-0">
        <div className="w-[1043px]">
          <RunToolbar />
          <div className="flex h-[927px]">
            <div className="ml-[2px] w-[230px] bg-white">
              <DeviceTree />
              <ToolPalette />
            </div>
            <TaskTable />
            <div className="ml-[1px] w-[2px] bg-white" />
          </div>
        </div>
        <div className="mt-[3px] h-[969px] w-[870px] border-l-2 border-[#696969] pt-[5px]">
          <div className="h-[964px] border-t border-l border-r border-[#696969] border-l-[#a0a0a0] border-r-[#d9d9d9] pt-[2px]">
            <div className="pl-px">
              <ImageView />
              <SetupPanel />
            </div>
            <Tabs />
          </div>
        </div>
        <div className="ml-auto w-[4px] border-r border-l border-[#606060] border-l-white bg-[#b0b0b0]" />
      </div>
      <div className="h-[2px] bg-[#8a8a8a]" />
    </div>
  );
}
